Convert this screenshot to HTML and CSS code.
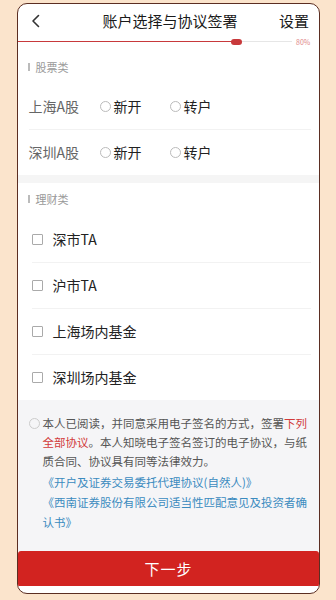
FILE: index.html
```html
<!DOCTYPE html>
<html lang="zh-CN">
<head>
    <meta charset="UTF-8">
    <meta name="viewport" content="width=device-width, initial-scale=1.0">
    <title>账户选择与协议签署</title>
    <link rel="stylesheet" href="styles.css">
</head>
<body>
    <div class="phone">
        <header class="topbar">
            <span class="back">
                <svg width="9" height="14" viewBox="0 0 9 14"><path d="M7.5 1.5 L2 7 L7.5 12.5" fill="none" stroke="#333" stroke-width="1.6" stroke-linecap="round" stroke-linejoin="round"/></svg>
            </span>
            <h1 class="title">账户选择与协议签署</h1>
            <span class="settings">设置</span>
        </header>

        <div class="progress">
            <div class="track">
                <div class="fill"><span class="thumb"></span></div>
            </div>
            <span class="percent">80%</span>
        </div>

        <section class="group">
            <div class="group-title first">股票类</div>
            <div class="row">
                <span class="row-label">上海A股</span>
                <label class="option"><span class="radio"></span>新开</label>
                <label class="option"><span class="radio"></span>转户</label>
            </div>
            <div class="row">
                <span class="row-label">深圳A股</span>
                <label class="option"><span class="radio"></span>新开</label>
                <label class="option"><span class="radio"></span>转户</label>
            </div>
        </section>

        <div class="divider"></div>

        <section class="group">
            <div class="group-title second">理财类</div>
            <label class="row check-row"><span class="checkbox"></span>深市TA</label>
            <label class="row check-row"><span class="checkbox"></span>沪市TA</label>
            <label class="row check-row"><span class="checkbox"></span>上海场内基金</label>
            <label class="row check-row"><span class="checkbox"></span>深圳场内基金</label>
        </section>

        <div class="agreement">
            <div class="agree-text">
                <span class="radio"></span>
                <p>本人已阅读，并同意采用电子签名的方式，签署<span class="em">下列</span><span class="em">全部协议</span>。本人知晓电子签名签订的电子协议，与纸质合同、协议具有同等法律效力。</p>
            </div>
            <div class="links">
                <a href="#">《开户及证券交易委托代理协议(自然人)》</a>
                <a href="#">《西南证券股份有限公司适当性匹配意见及投资者确认书》</a>
            </div>
        </div>

        <button class="next">下一步</button>
    </div>
</body>
</html>
```

FILE: styles.css
```css
* {
    margin: 0;
    padding: 0;
    box-sizing: border-box;
}

body {
    font-family: "Noto Sans CJK SC", "Noto Sans", sans-serif;
    background: #fbe4cc;
    width: 336px;
    height: 600px;
    overflow: hidden;
}

.phone {
    margin: 3px 16px 0 17px;
    height: 591px;
    border: 1.5px solid #5b2e22;
    border-radius: 10px;
    background: #fff;
    overflow: hidden;
    display: flex;
    flex-direction: column;
}

/* top bar */
.topbar {
    height: 33px;
    padding: 0 10px 0 13px;
    display: grid;
    grid-template-columns: 1fr auto 1fr;
    align-items: center;
    flex-shrink: 0;
}

.back {
    display: flex;
    align-items: center;
}

.title {
    font-size: 15px;
    font-weight: 400;
    color: #1a1a1a;
}

.settings {
    justify-self: end;
    font-size: 15px;
    color: #1a1a1a;
}

/* progress */
.progress {
    height: 9px;
    display: flex;
    align-items: center;
    padding-right: 3px;
    flex-shrink: 0;
}

.track {
    flex: 1;
    height: 1.5px;
    background: #e6e6e6;
    margin-right: 4px;
    display: flex;
}

.fill {
    width: 80%;
    background: #c8393b;
    display: flex;
    align-items: center;
    justify-content: flex-end;
}

.thumb {
    width: 11px;
    height: 6px;
    border-radius: 3px;
    background: #c8393b;
    margin-right: -5px;
}

.percent {
    font-size: 7px;
    color: #e08787;
    width: 20px;
}

/* groups */
.group-title {
    display: flex;
    align-items: center;
    gap: 6px;
    padding-left: 9.5px;
    font-size: 11px;
    line-height: 16px;
    color: #999;
}

.group-title::before {
    content: '';
    width: 2px;
    height: 8px;
    background: #bbb;
}

.group-title.first {
    padding-top: 13px;
    padding-bottom: 8.5px;
}

.group-title.second {
    padding-top: 8px;
    padding-bottom: 10px;
}

.row {
    height: 46px;
    margin: 0 8px 0 10.5px;
    border-bottom: 1px solid #f2f2f2;
    display: flex;
    align-items: center;
}

.row:last-child {
    height: 45px;
    border-bottom: none;
}

.row-label {
    width: 71px;
    font-size: 14px;
    color: #666;
}

.option {
    display: flex;
    align-items: center;
    gap: 3px;
    margin-right: 28px;
    font-size: 14px;
    color: #222;
}

.radio {
    width: 11px;
    height: 11px;
    border: 1px solid #bbb;
    border-radius: 50%;
    flex-shrink: 0;
}

.check-row {
    margin-left: 13.5px;
    gap: 10px;
    font-size: 14px;
    color: #222;
}

.checkbox {
    width: 11px;
    height: 11px;
    border: 1px solid #aaa;
    border-radius: 1px;
}

.divider {
    height: 8px;
    background: #f5f5f5;
    flex-shrink: 0;
}

/* agreement */
.agreement {
    flex: 1;
    background: #f5f5f7;
    padding: 14.5px 10px 0 10.5px;
}

.agree-text {
    display: flex;
    gap: 3px;
    align-items: flex-start;
}

.agree-text .radio {
    margin-top: 4px;
    border-color: #ccc;
}

.agree-text p {
    font-size: 11.5px;
    line-height: 19px;
    color: #555;
}

.em {
    color: #d23a3a;
}

.links {
    padding-left: 14px;
    margin-top: 0.5px;
}

.links a {
    display: block;
    font-size: 11.5px;
    line-height: 20px;
    color: #3b8bbf;
    text-decoration: none;
}

.next {
    height: 35px;
    margin-bottom: 7.5px;
    flex-shrink: 0;
    border: none;
    border-radius: 3px 3px 0 0;
    background: #d22320;
    color: #fff;
    font-family: inherit;
    font-size: 15px;
    letter-spacing: 1px;
}
```
